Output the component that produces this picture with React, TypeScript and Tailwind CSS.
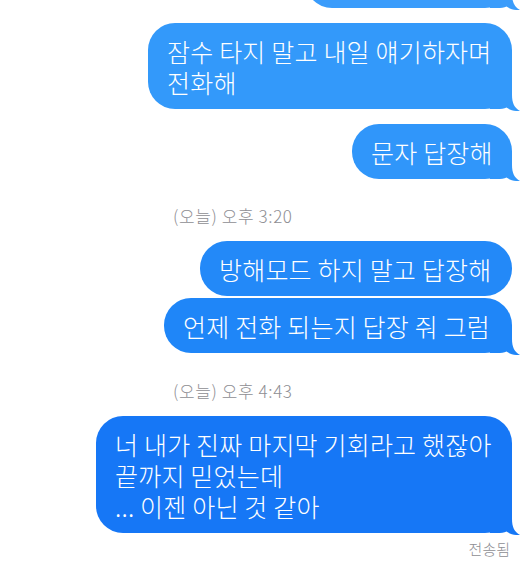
import React from 'react';

type BubbleProps = {
  lines: string[];
  width: string;
  bg: string;
  fill: string;
  tail?: boolean;
  className?: string;
};

// tail drawn over the bottom-right corner of the bubble
const Tail: React.FC<{ fill: string }> = ({ fill }) => (
  <svg
    className="absolute right-[-8px] bottom-[-2px]"
    width="30"
    height="30"
    viewBox="0 0 30 30"
  >
    <path
      d="M0 0 H22 V14 C22 22 24.5 27 30 30 C25 30.5 20 29 16.5 26.5 C13 28.5 8 28 0 28 Z"
      fill={fill}
    />
  </svg>
);

const Bubble: React.FC<BubbleProps> = ({ lines, width, bg, fill, tail = true, className = '' }) => (
  <div className={`relative ${width} ${bg} ${className} rounded-[27px] pl-[19px] pr-[16px] pt-[13px] pb-[11px] text-white`}>
    {tail && <Tail fill={fill} />}
    <div className="relative text-[25px] font-light leading-[31px] tracking-[0.2px] whitespace-nowrap">
      {lines.map((l) => (
        <div key={l}>{l}</div>
      ))}
    </div>
  </div>
);

const Stamp: React.FC<{ text: string; className: string }> = ({ text, className }) => (
  <div className={`self-start ml-[173px] text-[17px] font-light tracking-[0.6px] leading-[24px] text-[#8e8e93] ${className}`}>
    {text}
  </div>
);

export default function App() {
  return (
    <div
      className="w-[523px] h-[574px] overflow-hidden bg-white"
      style={{ fontFamily: '"Noto Sans CJK KR", "Noto Sans", sans-serif' }}
    >
      <div className="flex flex-col items-end pr-[11px]">
        {/* bubble cut off by the top edge */}
        <div className="relative w-[207px] h-[55px] mt-[-47px] bg-[#3a9cfb] rounded-[27px]">
          <Tail fill="#3a9cfb" />
        </div>

        <Bubble
          className="mt-[15px]"
          width="w-[364px]"
          bg="bg-[#3399fa]"
          fill="#3399fa"
          lines={['잠수 타지 말고 내일 얘기하자며', '전화해']}
        />
        <Bubble
          className="mt-[15px]"
          width="w-[160px]"
          bg="bg-[#3096fa]"
          fill="#3096fa"
          lines={['문자 답장해']}
        />

        <Stamp className="mt-[25px]" text="(오늘) 오후 3:20" />

        <Bubble
          className="mt-[13px]"
          width="w-[312px]"
          bg="bg-[#2389f8]"
          fill="#2389f8"
          tail={false}
          lines={['방해모드 하지 말고 답장해']}
        />
        <Bubble
          className="mt-[2px]"
          width="w-[348px]"
          bg="bg-[#1f86f8]"
          fill="#1f86f8"
          lines={['언제 전화 되는지 답장 줘 그럼']}
        />

        <Stamp className="mt-[26px]" text="(오늘) 오후 4:43" />

        <Bubble
          className="mt-[13px]"
          width="w-[416px]"
          bg="bg-[#1677f6]"
          fill="#1677f6"
          lines={['너 내가 진짜 마지막 기회라고 했잖아', '끝까지 믿었는데', '... 이젠 아닌 것 같아']}
        />

        <div className="mt-[6px] mr-[2px] text-[15px] font-light leading-[20px] text-[#8e8e93]">전송됨</div>
      </div>
    </div>
  );
}
